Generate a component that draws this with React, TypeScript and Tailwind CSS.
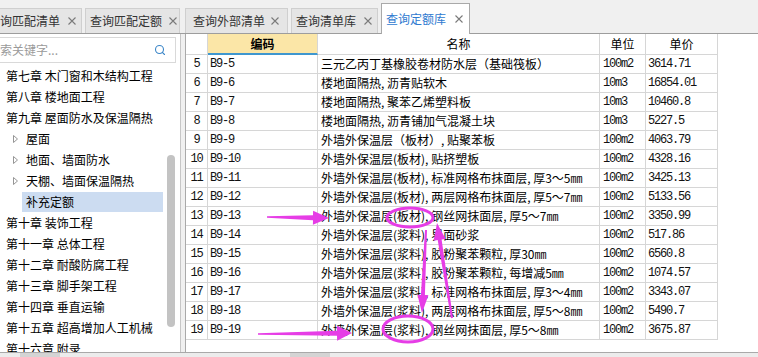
import { Search } from 'lucide-react';

type Row = [string, string, string, string, string];

const rows: Row[] = [
  ['5', 'B9-5', '三元乙丙丁基橡胶卷材防水层（基础筏板）', '100m2', '3614.71'],
  ['6', 'B9-6', '楼地面隔热, 沥青贴软木', '10m3', '16854.01'],
  ['7', 'B9-7', '楼地面隔热, 聚苯乙烯塑料板', '10m3', '10460.8'],
  ['8', 'B9-8', '楼地面隔热, 沥青铺加气混凝土块', '10m3', '5227.5'],
  ['9', 'B9-9', '外墙外保温层（板材）, 贴聚苯板', '100m2', '4063.79'],
  ['10', 'B9-10', '外墙外保温层(板材), 贴挤塑板', '100m2', '4328.16'],
  ['11', 'B9-11', '外墙外保温层(板材), 标准网格布抹面层, 厚3～5㎜', '100m2', '3425.13'],
  ['12', 'B9-12', '外墙外保温层(板材), 两层网格布抹面层, 厚5～7㎜', '100m2', '5133.56'],
  ['13', 'B9-13', '外墙外保温层(板材), 钢丝网抹面层, 厚5～7㎜', '100m2', '3350.99'],
  ['14', 'B9-14', '外墙外保温层(浆料), 界面砂浆', '100m2', '517.86'],
  ['15', 'B9-15', '外墙外保温层(浆料), 胶粉聚苯颗粒, 厚30㎜', '100m2', '6560.8'],
  ['16', 'B9-16', '外墙外保温层(浆料), 胶粉聚苯颗粒, 每增减5㎜', '100m2', '1074.57'],
  ['17', 'B9-17', '外墙外保温层(浆料), 标准网格布抹面层, 厚3～4㎜', '100m2', '3343.07'],
  ['18', 'B9-18', '外墙外保温层(浆料), 两层网格布抹面层, 厚5～8㎜', '100m2', '5490.7'],
  ['19', 'B9-19', '外墙外保温层(浆料), 钢丝网抹面层, 厚5～8㎜', '100m2', '3675.87'],
];

type TreeItem = { label: string; level: 0 | 1; arrow?: boolean; selected?: boolean };

const tree: TreeItem[] = [
  { label: '第七章 木门窗和木结构工程', level: 0 },
  { label: '第八章 楼地面工程', level: 0 },
  { label: '第九章 屋面防水及保温隔热', level: 0 },
  { label: '屋面', level: 1, arrow: true },
  { label: '地面、墙面防水', level: 1, arrow: true },
  { label: '天棚、墙面保温隔热', level: 1, arrow: true },
  { label: '补充定额', level: 1, selected: true },
  { label: '第十章 装饰工程', level: 0 },
  { label: '第十一章 总体工程', level: 0 },
  { label: '第十二章 耐酸防腐工程', level: 0 },
  { label: '第十三章 脚手架工程', level: 0 },
  { label: '第十四章 垂直运输', level: 0 },
  { label: '第十五章 超高增加人工机械', level: 0 },
  { label: '第十六章 附录', level: 0 },
];

function CloseMark() {
  return (
    <svg width="8" height="8" viewBox="0 0 8 8" className="shrink-0">
      <path d="M0.5 0.5 L7.5 7.5 M7.5 0.5 L0.5 7.5" stroke="#7a7a7a" strokeWidth="1.1" />
    </svg>
  );
}

function TabBar() {
  return (
    <div className="flex h-[34px] items-end border-b border-[#9d9d9d] bg-[#f0f0f0]">
      <div className="-ml-[17px] flex h-[25px] w-[99px] items-center border border-b-0 border-[#cfcfcf] bg-[#e5e5e5] pl-[4px] text-[#333]">
        <span>查询匹配清单</span>
        <span className="ml-[8px]"><CloseMark /></span>
      </div>
      <div className="ml-[3px] flex h-[25px] w-[95px] items-center border border-b-0 border-[#cfcfcf] bg-[#e5e5e5] pl-[4px] text-[#333]">
        <span>查询匹配定额</span>
        <span className="ml-[7px]"><CloseMark /></span>
      </div>
      <div className="ml-[5px] flex h-[25px] w-[103px] items-center border border-b-0 border-[#cfcfcf] bg-[#e5e5e5] pl-[7px] text-[#333]">
        <span>查询外部清单</span>
        <span className="ml-[6px]"><CloseMark /></span>
      </div>
      <div className="ml-[3px] flex h-[25px] w-[87px] items-center border border-b-0 border-[#cfcfcf] bg-[#e5e5e5] pl-[4px] text-[#333]">
        <span>查询清单库</span>
        <span className="ml-[8px]"><CloseMark /></span>
      </div>
      <div className="-mb-px ml-[3px] flex h-[31px] w-[89px] items-center border border-b-0 border-[#a9a9a9] bg-white pl-[4px] text-[#2f7ad0]">
        <span>查询定额库</span>
        <span className="ml-[9px]"><CloseMark /></span>
      </div>
    </div>
  );
}

function TreePanel() {
  return (
    <div className="relative w-[181px] overflow-hidden border-r border-[#c6c6c6] bg-white">
      <div className="mt-[3px] -ml-[16px] flex h-[26px] w-[192px] items-center border border-[#d9d9d9] bg-white pl-[3px] pr-[9px] text-[#9a9a9a]">
        <span className="flex-1">搜索关键字...</span>
        <Search size={12} strokeWidth={2.2} className="text-[#3b86c8]" />
      </div>
      <div className="mt-[2px] flex flex-col">
        {tree.map((item) => (
          <div key={item.label} className="flex h-[21px] items-center">
            {item.level === 0 ? (
              <span className="pl-[6px] whitespace-nowrap">{item.label}</span>
            ) : (
              <>
                <span className="flex w-[22px] justify-end pr-[4px]">
                  {item.arrow ? (
                    <svg width="5" height="8" viewBox="0 0 5 8">
                      <path d="M0.5 0.5 L4.5 4 L0.5 7.5 Z" fill="none" stroke="#8a8a8a" strokeWidth="0.9" />
                    </svg>
                  ) : null}
                </span>
                <span
                  className={
                    item.selected
                      ? 'flex h-[20px] w-[141px] items-center bg-[#ccdcf1] pl-[4px]'
                      : 'pl-[4px] whitespace-nowrap'
                  }
                >
                  {item.label}
                </span>
              </>
            )}
          </div>
        ))}
      </div>
      <div className="absolute left-[167px] top-[121px] h-[172px] w-[8px] rounded-full bg-[#c3c3c3]" />
    </div>
  );
}

function QuotaTable() {
  const mono = "font-['Liberation_Mono',monospace] text-[12px] tracking-[-1.2px] text-[#111]";
  return (
    <div className="flex-1 border-l border-[#a9a9a9] bg-white">
      <div className="grid w-[532px] grid-cols-[22px_110px_282px_46px_72px]">
        <div className="h-[21px] border-r border-b border-[#d6d6d6]" />
        <div className="flex h-[21px] items-center justify-center border-r border-b-2 border-r-[#d6d6d6] border-b-[#3f97cf] bg-[#fbe6a7] font-bold">
          编码
        </div>
        <div className="flex h-[21px] items-center justify-center border-r border-b border-[#d6d6d6]">名称</div>
        <div className="flex h-[21px] items-center justify-center border-r border-b border-[#d6d6d6]">单位</div>
        <div className="flex h-[21px] items-center justify-center border-r border-b border-[#d6d6d6]">单价</div>
        {rows.map(([no, code, name, unit, price]) => (
          <div key={no} className="contents">
            <div className={`flex h-[19px] items-center justify-center border-r border-b border-[#d6d6d6] ${mono}`}>{no}</div>
            <div className={`flex h-[19px] items-center border-r border-b border-[#d6d6d6] pl-[2px] ${mono}`}>{code}</div>
            <div className="flex h-[19px] items-center overflow-hidden whitespace-pre border-r border-b border-[#d6d6d6] pl-[3px]">
              {name}
            </div>
            <div className={`flex h-[19px] items-center border-r border-b border-[#d6d6d6] pl-[3px] ${mono}`}>{unit}</div>
            <div className={`flex h-[19px] items-center border-r border-b border-[#d6d6d6] pl-[2px] ${mono}`}>{price}</div>
          </div>
        ))}
      </div>
    </div>
  );
}

// tapered arrow: thin tail, wider body near the head
function arrow(x1: number, y1: number, x2: number, y2: number, tw: number, bw: number, hl: number, hw: number) {
  const len = Math.hypot(x2 - x1, y2 - y1);
  const ux = (x2 - x1) / len;
  const uy = (y2 - y1) / len;
  const nx = -uy;
  const ny = ux;
  const bx = x2 - ux * hl;
  const by = y2 - uy * hl;
  const p = (x: number, y: number, w: number) => `${(x + nx * w).toFixed(1)},${(y + ny * w).toFixed(1)}`;
  return [
    p(x1, y1, tw / 2),
    p(bx, by, bw / 2),
    p(bx, by, hw / 2),
    `${x2},${y2}`,
    p(bx, by, -hw / 2),
    p(bx, by, -bw / 2),
    p(x1, y1, -tw / 2),
  ].join(' ');
}

const pink = '#e63de6';

function Annotations() {
  return (
    <svg className="pointer-events-none absolute left-0 top-0" width="758" height="357" viewBox="0 0 758 357">
      <ellipse cx="410" cy="217.5" rx="23" ry="9.5" fill="none" stroke={pink} strokeWidth="3" />
      <ellipse cx="408" cy="329" rx="25" ry="13" fill="none" stroke={pink} strokeWidth="3" />
      <polygon points={arrow(267, 217, 329, 218, 1.5, 5, 16, 14)} fill={pink} />
      <polygon points={arrow(258, 334, 352, 333, 1.5, 5, 15, 15)} fill={pink} />
      <polygon points={arrow(426, 230, 422, 313, 2, 4, 18, 11)} fill={pink} />
      <polygon points={arrow(452, 318, 437, 223, 2, 4, 17, 12)} fill={pink} />
    </svg>
  );
}

export default function App() {
  return (
    <div className="relative h-[357px] w-[758px] overflow-hidden bg-[#f0f0f0] font-['Noto_Sans_CJK_SC',sans-serif] text-[12px] leading-none text-black">
      <TabBar />
      <div className="flex h-[318px]">
        <TreePanel />
        <div className="w-[4px] bg-[#f0f0f0]" />
        <QuotaTable />
      </div>
      <div className="flex h-[5px] border-t border-[#a9a9a9] bg-[#ececec]">
        <div className="ml-[20px] w-[40px] bg-[#d4d4d4]" />
        <div className="ml-[230px] w-[40px] bg-[#d4d4d4]" />
      </div>
      <Annotations />
    </div>
  );
}
